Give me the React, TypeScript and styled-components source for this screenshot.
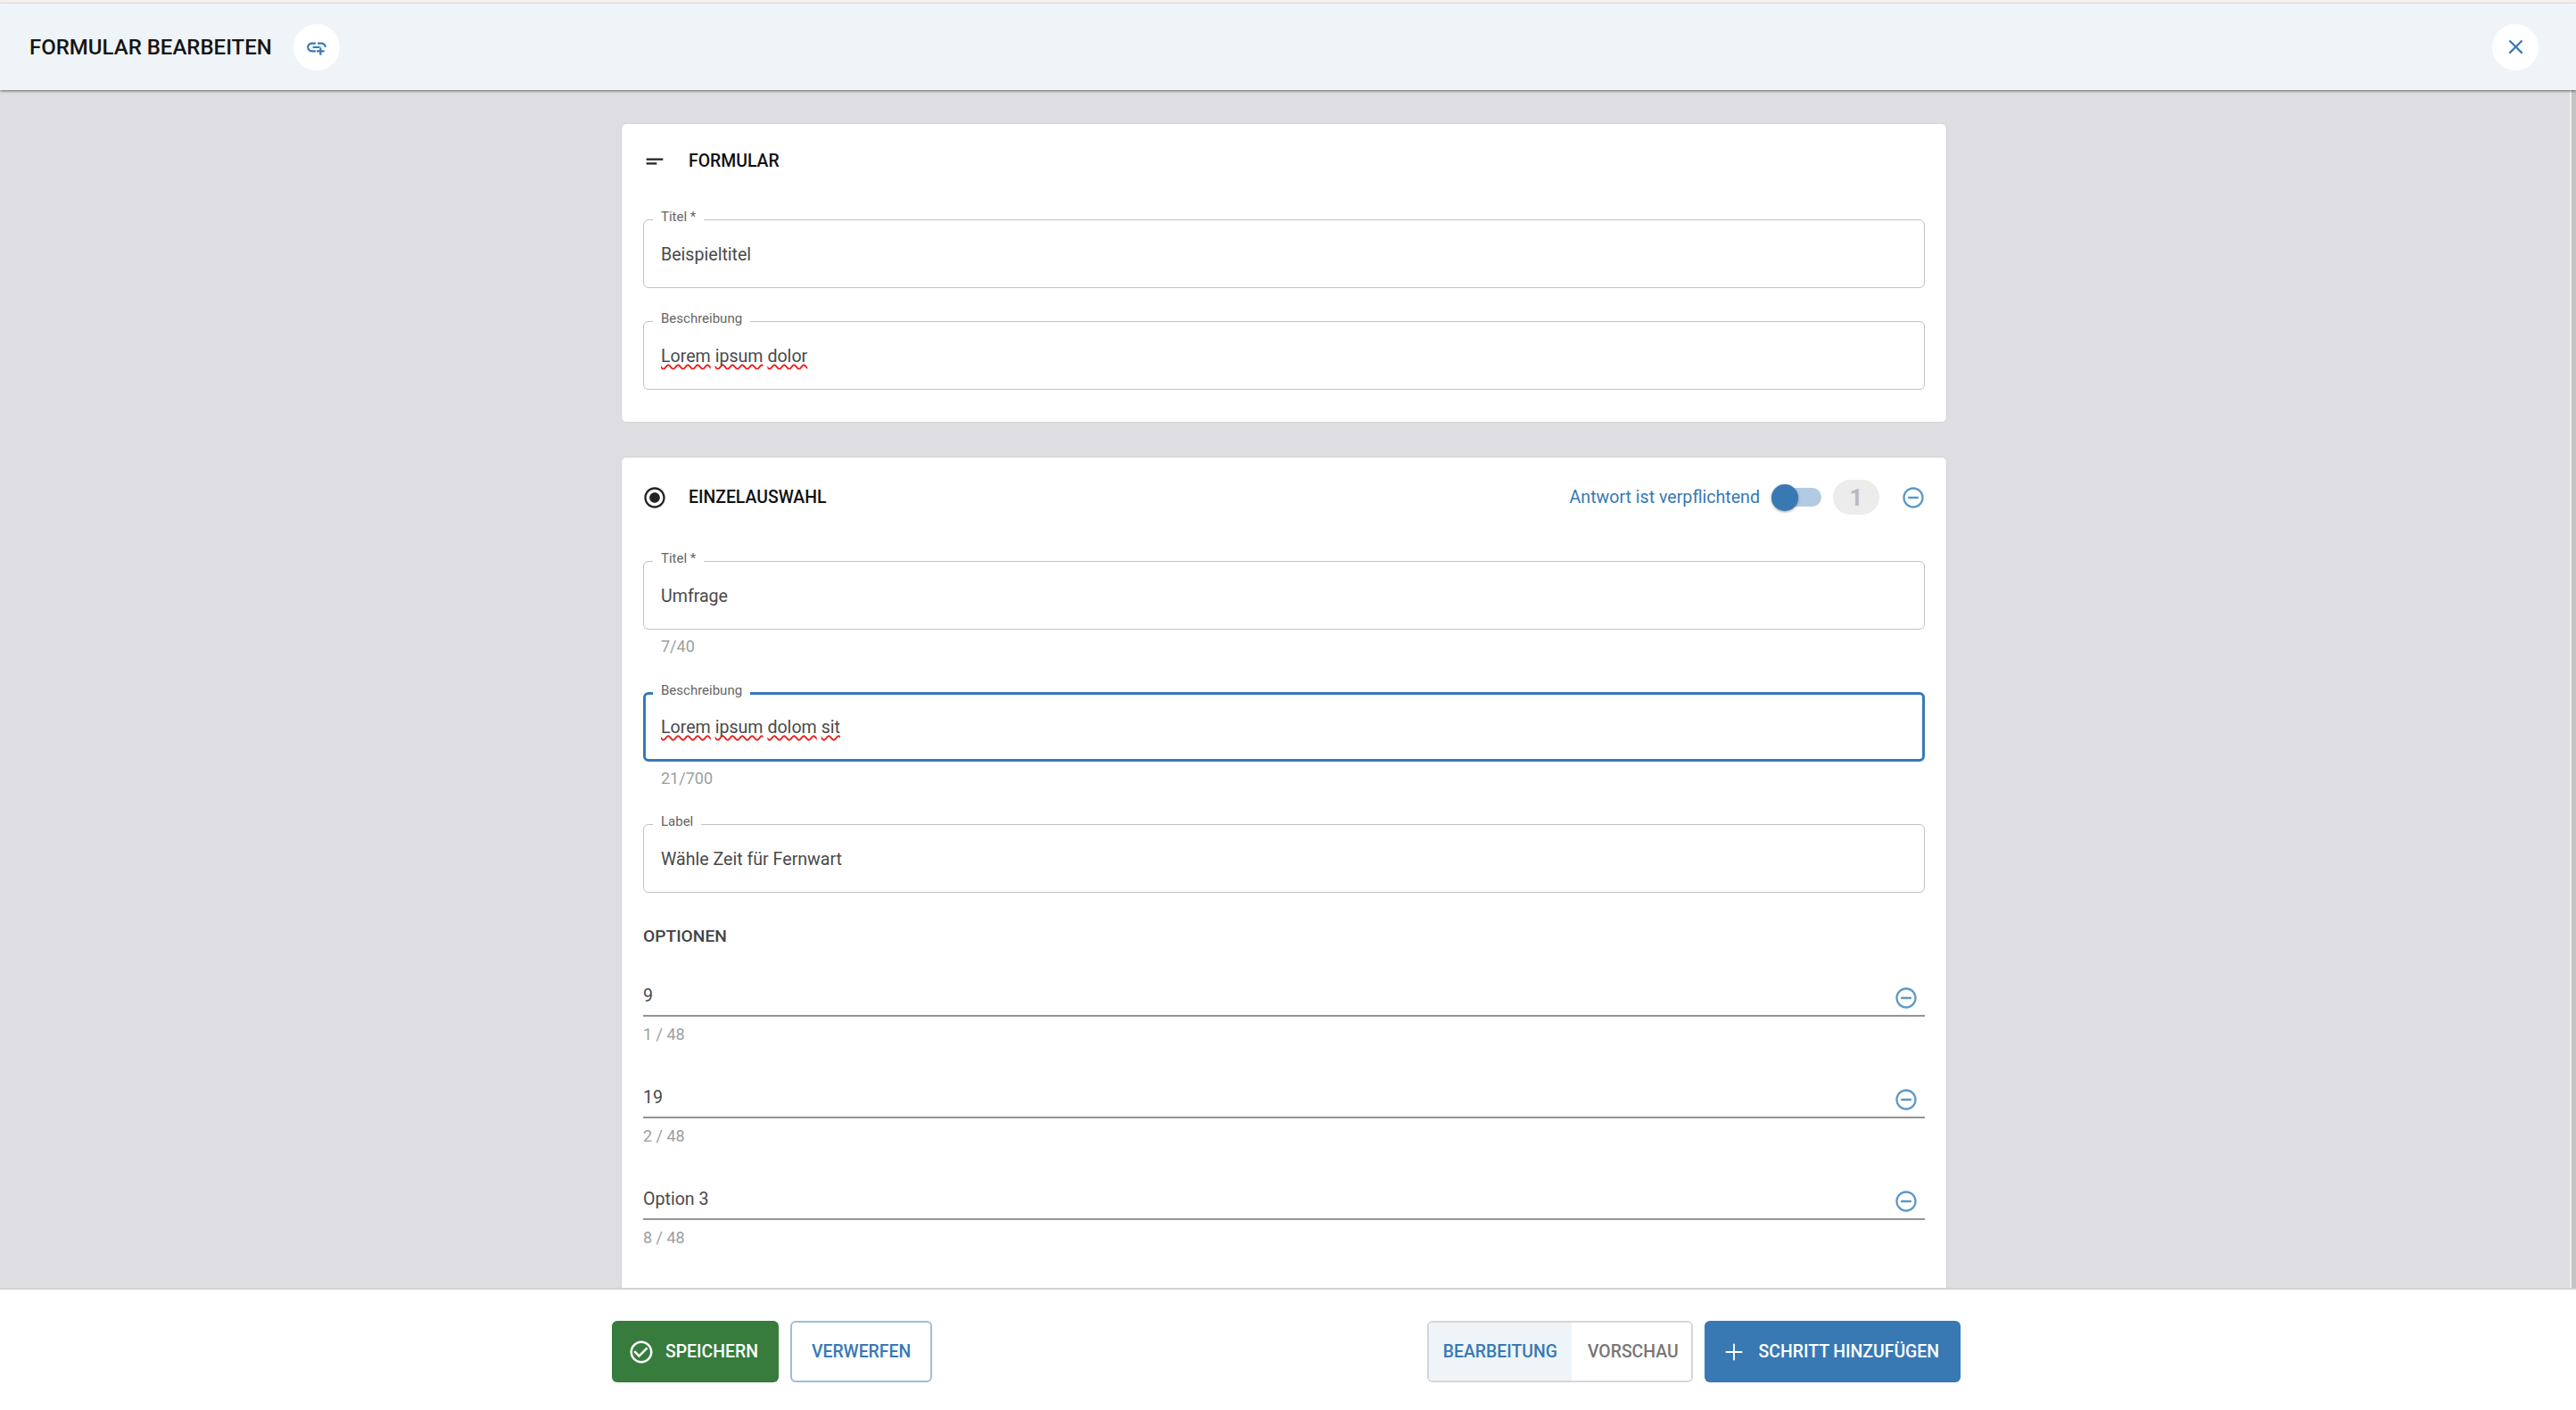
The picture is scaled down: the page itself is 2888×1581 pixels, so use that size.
import { ReactNode } from 'react';
import styled, { createGlobalStyle } from 'styled-components';

const GlobalStyle = createGlobalStyle`
    html, body {
        margin: 0;
        height: 100%;
        background: #f5f1f1;
        font-family: Roboto, "Liberation Sans", sans-serif;
        overflow: hidden;
    }
`;

const Shell = styled.div`
    display: flex;
    flex-direction: column;
    height: 1581px;
    padding-top: 4px;
    box-sizing: border-box;
`;

const TopBar = styled.header`
    position: relative;
    z-index: 2;
    flex: 0 0 97px;
    display: flex;
    align-items: center;
    padding: 0 42px 0 33px;
    background: #eff4f8;
    box-shadow: 0 1px 3px rgba(0, 0, 0, 0.55);
`;

const PageTitle = styled.h1`
    margin: 0 24px 0 0;
    font-size: 24px;
    font-weight: 500;
    color: #151515;
`;

const RoundButton = styled.button`
    display: flex;
    align-items: center;
    justify-content: center;
    width: 52px;
    height: 52px;
    padding: 0;
    border: 0;
    border-radius: 50%;
    background: #fff;
    color: #3879b4;
    margin-left: ${(p: { $push?: boolean }) => (p.$push ? 'auto' : '0')};
`;

const Middle = styled.div`
    flex: 1;
    min-height: 0;
    display: flex;
`;

const Scroller = styled.main`
    flex: 1;
    min-width: 0;
    overflow: hidden;
    background: #dedee2;
    padding: 37px 2px 0 0;
`;

const ScrollRail = styled.div`
    flex: 0 0 7px;
    box-sizing: border-box;
    background: #c4c4c4;
    border-left: 2px solid #efefef;
`;

const Column = styled.div`
    display: flex;
    flex-direction: column;
    gap: 38px;
    width: 1487px;
    margin: 0 auto;
`;

const Card = styled.section`
    box-sizing: border-box;
    padding: 0 24px 36px;
    background: #fff;
    border: 1px solid #d2d2d6;
    border-radius: 6px;
`;

const CardHeader = styled.div<{ $tall?: boolean }>`
    display: flex;
    align-items: center;
    height: ${(p) => (p.$tall ? '89px' : '83px')};
    margin-bottom: ${(p) => (p.$tall ? '27px' : '24px')};
`;

const CardIcon = styled.span`
    display: flex;
    width: 28px;
    margin: 0 24px 0 -1px;
    color: #222;
`;

const CardTitle = styled.h2`
    margin: 0;
    font-size: 19.4px;
    font-weight: 500;
    color: #111;
`;

const RequiredGroup = styled.div`
    display: flex;
    align-items: center;
    margin-left: auto;
    margin-right: -1px;
`;

const RequiredLabel = styled.span`
    font-size: 19.6px;
    color: #3879b4;
`;

const Switch = styled.span`
    position: relative;
    display: block;
    width: 56px;
    height: 21px;
    margin: 0 13px;
    border-radius: 11px;
    background: #b3cbe2;

    &::after {
        content: '';
        position: absolute;
        top: -4.5px;
        left: 0;
        width: 30px;
        height: 30px;
        border-radius: 50%;
        background: #3879b4;
        box-shadow: 0 1px 3px rgba(0, 0, 0, 0.4);
    }
`;

const StepBadge = styled.span`
    display: flex;
    align-items: center;
    justify-content: center;
    width: 52px;
    height: 39px;
    margin-right: 24px;
    border-radius: 20px;
    background: #ececec;
    color: #b9b9b9;
    font-size: 26px;
    font-weight: 700;
`;

const RemoveIcon = styled.span`
    display: flex;
    color: #5c97c8;
`;

const FieldStack = styled.div`
    display: flex;
    flex-direction: column;
    gap: ${(p: { $gap: number }) => p.$gap}px;
`;

const FieldBlock = styled.div`
    display: flex;
    flex-direction: column;
`;

const FieldBox = styled.div<{ $focused?: boolean }>`
    position: relative;
    box-sizing: border-box;
    display: flex;
    align-items: center;
    height: ${(p) => (p.$focused ? '78px' : '77px')};
    padding: ${(p) => (p.$focused ? '1px 0 0 17px' : '1px 0 0 19px')};
    border: ${(p) => (p.$focused ? '3px solid #3879b4' : '1px solid #c2c2c2')};
    border-radius: 6px;
    font-size: 19.6px;
    color: #4a4a4a;
`;

const FieldLabel = styled.label<{ $focused?: boolean }>`
    position: absolute;
    top: ${(p) => (p.$focused ? '-14px' : '-13px')};
    left: ${(p) => (p.$focused ? '8px' : '10px')};
    padding: 0 9px;
    background: #fff;
    font-size: 15px;
    line-height: 18px;
    color: #666;
`;

const Misspelled = styled.span`
    text-decoration: underline wavy #e8201c 1.5px;
    text-decoration-skip-ink: none;
    text-underline-offset: 2px;
`;

const Counter = styled.div`
    height: 24px;
    margin-top: 7px;
    padding-left: 20px;
    font-size: 18px;
    line-height: 24px;
    color: #9e9e9e;
`;

const SectionLabel = styled.h3`
    margin: 36px 0 29px;
    font-size: 19.2px;
    line-height: 26px;
    font-weight: 500;
    color: #444;
`;

const OptionList = styled.div`
    display: flex;
    flex-direction: column;
    gap: 34px;
    padding-bottom: 120px;
`;

const OptionRow = styled.div`
    box-sizing: border-box;
    display: flex;
    align-items: center;
    justify-content: space-between;
    height: 48px;
    padding: 2px 7px 0 0;
    border-bottom: 2px solid #949494;
    font-size: 19.6px;
    color: #4a4a4a;
`;

const OptionRemove = styled(RemoveIcon)`
    position: relative;
    top: 3px;
`;

const OptionCounter = styled(Counter)`
    margin-top: 8px;
    padding-left: 0;
`;

const Footer = styled.footer`
    position: relative;
    z-index: 2;
    flex: 0 0 137px;
    box-sizing: border-box;
    display: flex;
    justify-content: center;
    padding: 35px 4px 0 0;
    background: #fff;
    border-top: 2px solid #d2d2d8;
`;

const FooterInner = styled.div`
    display: flex;
    justify-content: space-between;
    width: 1512px;
    height: 69px;
`;

const ButtonGroup = styled.div`
    display: flex;
    gap: 13px;
`;

const buttonPadding = { green: '0 23px 0 18px', blue: '0 24px 0 17px', outline: '0 22px' };

const ActionButton = styled.button<{ $variant: 'green' | 'blue' | 'outline' }>`
    box-sizing: border-box;
    display: flex;
    align-items: center;
    gap: 12px;
    height: 69px;
    padding: ${(p) => buttonPadding[p.$variant]};
    border: ${(p) => (p.$variant === 'outline' ? '2px solid #9dbddb' : '0')};
    border-radius: 6px;
    background: ${(p) => (p.$variant === 'green' ? '#377c3c' : p.$variant === 'blue' ? '#3879b4' : '#fff')};
    color: ${(p) => (p.$variant === 'outline' ? '#3879b4' : '#fff')};
    font-family: inherit;
    font-size: 19.4px;
    font-weight: 500;
`;

const ModeSwitch = styled.div`
    box-sizing: border-box;
    display: flex;
    height: 69px;
    border: 2px solid #d3d6da;
    border-radius: 6px;
    overflow: hidden;
`;

const ModeTab = styled.span<{ $active?: boolean }>`
    display: flex;
    align-items: center;
    padding: ${(p) => (p.$active ? '0 16px' : '0 14px 0 18px')};
    background: ${(p) => (p.$active ? '#eff4f8' : '#fff')};
    color: ${(p) => (p.$active ? '#3879b4' : '#777')};
    font-size: 19.4px;
    font-weight: 500;
`;

const Icon = ({ d, size }: { d: string; size: number }) => (
    <svg width={size} height={size} viewBox='0 0 24 24' fill='currentColor'>
        <path d={d} />
    </svg>
);

const icons = {
    addLink:
        'M8 11h8v2H8zm12.1 1H22c0-2.76-2.24-5-5-5h-4v1.9h4c1.71 0 3.1 1.39 3.1 3.1zM3.9 12c0-1.71 1.39-3.1 3.1-3.1h4V7H7c-2.76 0-5 2.24-5 5s2.24 5 5 5h4v-1.9H7c-1.71 0-3.1-1.39-3.1-3.1zM17 12h-2v3h-3v2h3v3h2v-3h3v-2h-3z',
    close: 'M19 6.41 17.59 5 12 10.59 6.41 5 5 6.41 10.59 12 5 17.59 6.41 19 12 13.41 17.59 19 19 17.59 13.41 12z',
    shortText: 'M4 9h16v2H4zm0 4h10v2H4z',
    radio: 'M12 7c-2.76 0-5 2.24-5 5s2.24 5 5 5 5-2.24 5-5-2.24-5-5-5zm0-5C6.48 2 2 6.48 2 12s4.48 10 10 10 10-4.48 10-10S17.52 2 12 2zm0 18c-4.42 0-8-3.58-8-8s3.58-8 8-8 8 3.58 8 8-3.58 8-8 8z',
    remove: 'M7 11v2h10v-2H7zm5-9C6.48 2 2 6.48 2 12s4.48 10 10 10 10-4.48 10-10S17.52 2 12 2zm0 18c-4.41 0-8-3.59-8-8s3.59-8 8-8 8 3.59 8 8-3.59 8-8 8z',
    check: 'M16.59 7.58 10 14.17l-3.59-3.58L5 12l5 5 8-8zM12 2C6.48 2 2 6.48 2 12s4.48 10 10 10 10-4.48 10-10S17.52 2 12 2zm0 18c-4.42 0-8-3.58-8-8s3.58-8 8-8 8 3.58 8 8-3.58 8-8 8z',
    plus: 'M19 12.7h-6.3V19h-1.4v-6.3H5v-1.4h6.3V5h1.4v6.3H19z',
};

const Field = ({ label, focused, children }: { label: string; focused?: boolean; children: ReactNode }) => (
    <FieldBox $focused={focused}>
        <FieldLabel $focused={focused}>{label}</FieldLabel>
        <span>{children}</span>
    </FieldBox>
);

const SpellChecked = ({ text }: { text: string }) => (
    <>
        {text.split(' ').map((word, i) => (
            <span key={i}>
                {i > 0 ? ' ' : ''}
                <Misspelled>{word}</Misspelled>
            </span>
        ))}
    </>
);

const options = [
    { value: '9', count: '1 / 48' },
    { value: '19', count: '2 / 48' },
    { value: 'Option 3', count: '8 / 48' },
];

const App = () => {
    return (
        <Shell>
            <GlobalStyle />
            <TopBar>
                <PageTitle>FORMULAR BEARBEITEN</PageTitle>
                <RoundButton>
                    <Icon d={icons.addLink} size={26} />
                </RoundButton>
                <RoundButton $push>
                    <Icon d={icons.close} size={27} />
                </RoundButton>
            </TopBar>
            <Middle>
                <Scroller>
                    <Column>
                        <Card>
                            <CardHeader>
                                <CardIcon>
                                    <Icon d={icons.shortText} size={28} />
                                </CardIcon>
                                <CardTitle>FORMULAR</CardTitle>
                            </CardHeader>
                            <FieldStack $gap={37}>
                                <Field label='Titel *'>Beispieltitel</Field>
                                <Field label='Beschreibung'>
                                    <SpellChecked text='Lorem ipsum dolor' />
                                </Field>
                            </FieldStack>
                        </Card>
                        <Card>
                            <CardHeader $tall>
                                <CardIcon>
                                    <Icon d={icons.radio} size={28} />
                                </CardIcon>
                                <CardTitle>EINZELAUSWAHL</CardTitle>
                                <RequiredGroup>
                                    <RequiredLabel>Antwort ist verpflichtend</RequiredLabel>
                                    <Switch />
                                    <StepBadge>1</StepBadge>
                                    <RemoveIcon>
                                        <Icon d={icons.remove} size={28} />
                                    </RemoveIcon>
                                </RequiredGroup>
                            </CardHeader>
                            <FieldStack $gap={39}>
                                <FieldBlock>
                                    <Field label='Titel *'>Umfrage</Field>
                                    <Counter>7/40</Counter>
                                </FieldBlock>
                                <FieldBlock>
                                    <Field label='Beschreibung' focused>
                                        <SpellChecked text='Lorem ipsum dolom sit' />
                                    </Field>
                                    <Counter>21/700</Counter>
                                </FieldBlock>
                                <Field label='Label'>Wähle Zeit für Fernwart</Field>
                            </FieldStack>
                            <SectionLabel>OPTIONEN</SectionLabel>
                            <OptionList>
                                {options.map((option) => (
                                    <FieldBlock key={option.value}>
                                        <OptionRow>
                                            {option.value}
                                            <OptionRemove>
                                                <Icon d={icons.remove} size={28} />
                                            </OptionRemove>
                                        </OptionRow>
                                        <OptionCounter>{option.count}</OptionCounter>
                                    </FieldBlock>
                                ))}
                            </OptionList>
                        </Card>
                    </Column>
                </Scroller>
                <ScrollRail />
            </Middle>
            <Footer>
                <FooterInner>
                    <ButtonGroup>
                        <ActionButton $variant='green'>
                            <Icon d={icons.check} size={30} />
                            SPEICHERN
                        </ActionButton>
                        <ActionButton $variant='outline'>VERWERFEN</ActionButton>
                    </ButtonGroup>
                    <ButtonGroup>
                        <ModeSwitch>
                            <ModeTab $active>BEARBEITUNG</ModeTab>
                            <ModeTab>VORSCHAU</ModeTab>
                        </ModeSwitch>
                        <ActionButton $variant='blue'>
                            <Icon d={icons.plus} size={32} />
                            SCHRITT HINZUFÜGEN
                        </ActionButton>
                    </ButtonGroup>
                </FooterInner>
            </Footer>
        </Shell>
    );
};

export default App;
